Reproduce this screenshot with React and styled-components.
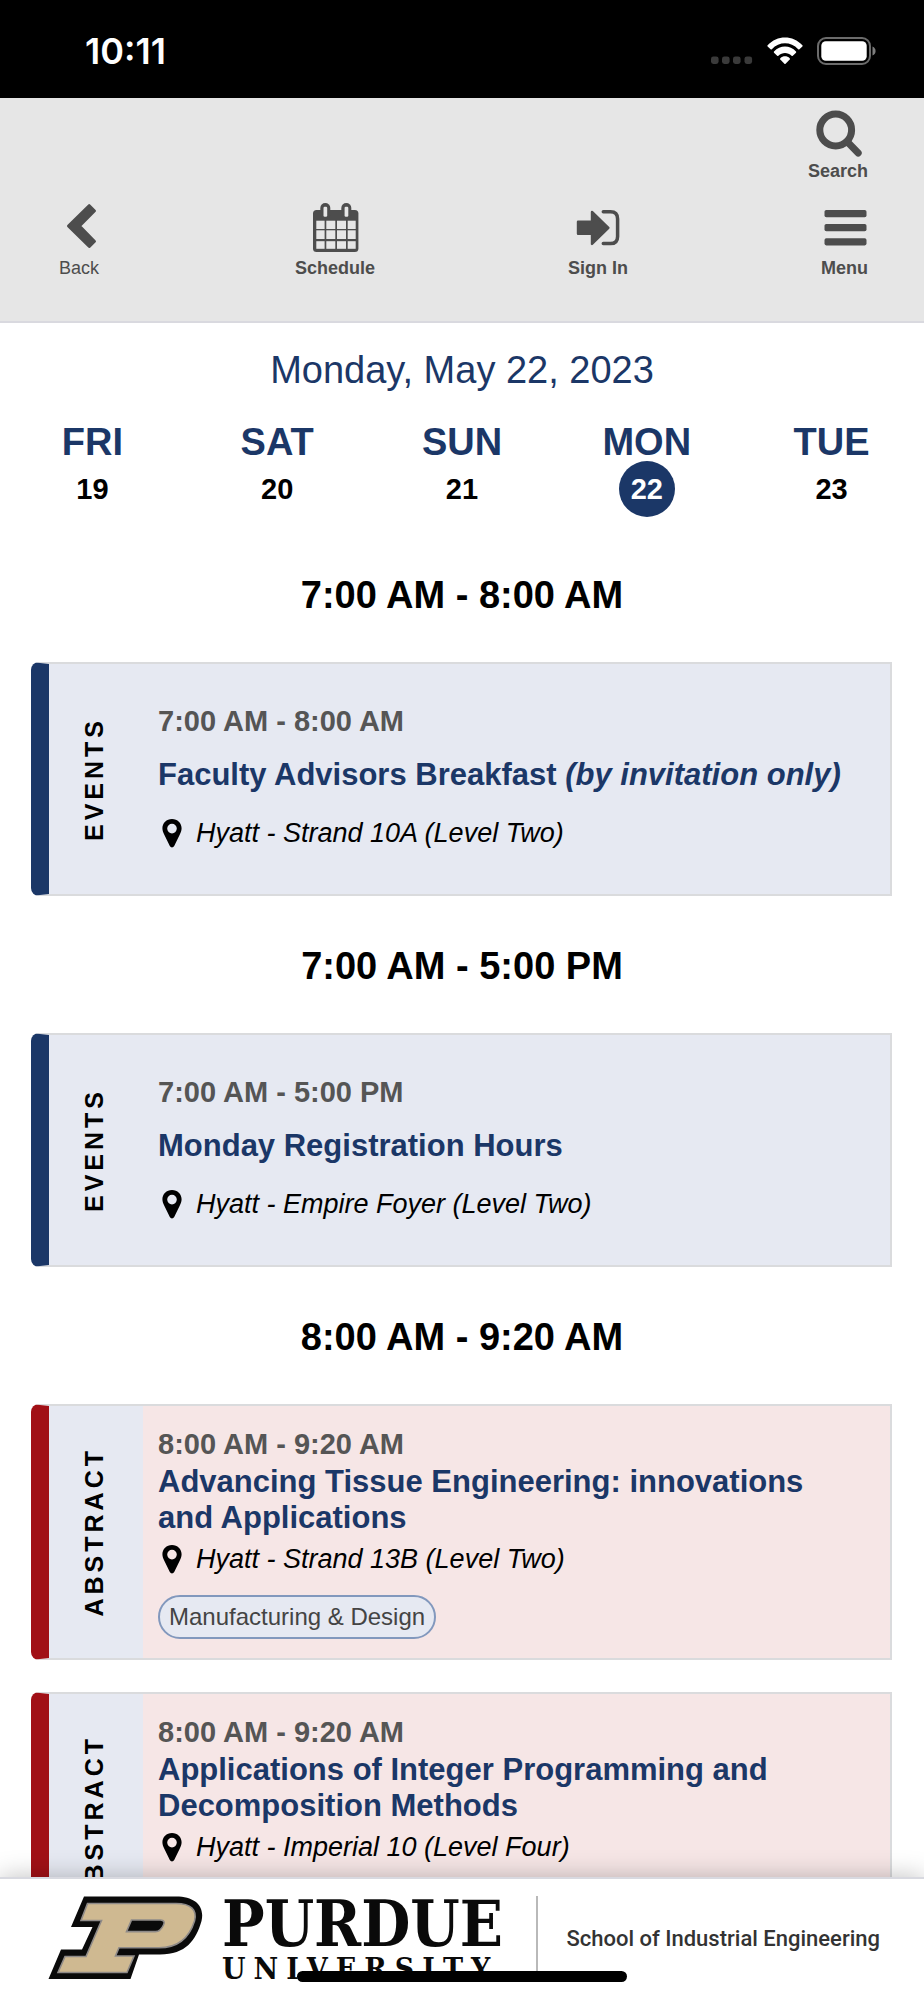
import React, { useState } from 'react';
import styled, { createGlobalStyle } from 'styled-components';

const GlobalStyle = createGlobalStyle`
    * {
        box-sizing: border-box;
    }
    body {
        margin: 0;
        background: white;
        color: black;
        font-family: 'Liberation Sans', Arial, Helvetica, sans-serif;
    }
    h1, h2, h3, p, ul {
        margin: 0;
        padding: 0;
    }
`

const Screen = styled.div`
    height: 100vh;
    display: flex;
    flex-direction: column;
`

/* status bar */

const StatusBar = styled.div`
    flex: none;
    height: 98px;
    padding: 4px 48px 0 85px;
    display: flex;
    align-items: center;
    justify-content: space-between;
    background: black;
`
const Clock = styled.span`
    color: white;
    font-family: Inter, sans-serif;
    font-size: 36px;
    font-weight: 600;
`
const StatusIcons = styled.div`
    display: flex;
    align-items: center;
    gap: 14px;
`

/* top navigation */

const Header = styled.header`
    flex: none;
    display: flex;
    flex-direction: column;
    gap: 20px;
    padding: 6px 56px 43px;
    background: #e6e6e6;
    border-bottom: 2px solid #d9d9df;
`
const NavRow = styled.nav`
    display: flex;
    justify-content: ${props => props.$end ? 'flex-end' : 'space-between'};
`
const NavLink = styled.a`
    display: flex;
    flex-direction: column;
    align-items: center;
    gap: 3px;
    color: #4d4d4d;
    font-size: 18px;
    font-weight: ${props => props.$light ? 400 : 700};
    line-height: 20px;
    text-decoration: none;
`
const NavIcon = styled.svg`
    display: block;
    width: 46px;
    height: 54px;
    overflow: visible;
    fill: currentColor;
`

/* day picker */

const Main = styled.main`
    flex: 1;
    min-height: 0;
    overflow-y: auto;
    scrollbar-width: none;
    padding: 25px 0 32px;
`
const DateTitle = styled.h1`
    color: #1b3767;
    font-size: 38px;
    font-weight: 400;
    line-height: 44px;
    text-align: center;
`
const Days = styled.div`
    display: grid;
    grid-template-columns: repeat(5, 1fr);
    padding: 31px 0 8px;
`
const Day = styled.button`
    display: flex;
    flex-direction: column;
    align-items: center;
    padding: 0;
    border: none;
    background: none;
    font-family: inherit;
    font-weight: 700;
    cursor: pointer;
`
const DayName = styled.span`
    color: #1b3767;
    font-size: 38px;
    line-height: 38px;
`
const DayNumber = styled.span`
    width: 56px;
    border-radius: 50%;
    background: ${props => props.$active ? '#1b3767' : 'transparent'};
    color: ${props => props.$active ? 'white' : 'black'};
    font-size: 29px;
    line-height: 56px;
`

/* sessions */

const SlotTitle = styled.h2`
    margin: 48px 0 45px;
    font-size: 38px;
    font-weight: 700;
    line-height: 44px;
    text-align: center;
`
const Cards = styled.div`
    display: flex;
    flex-direction: column;
    gap: 32px;
    margin: 0 32px 0 31px;
`
const Card = styled.article`
    display: flex;
    border: 2px solid #dadbdd;
    border-left: 18px solid ${props => props.$abstract ? '#a11016' : '#1b3767'};
    border-radius: 8px 0 0 8px;
    background: ${props => props.$abstract ? '#f6e6e6' : '#e6e9f2'};
`
const Kind = styled.div`
    flex: none;
    width: 94px;
    display: flex;
    align-items: center;
    justify-content: center;
    padding-right: 4px;
    background: #e6e9f2;

    span {
        writing-mode: vertical-rl;
        transform: rotate(180deg);
        font-size: 25px;
        font-weight: 700;
        letter-spacing: 4px;
        line-height: 30px;
        text-transform: uppercase;
    }
`
const Body = styled.div`
    flex: 1;
    padding: ${props => props.$abstract ? '20px 28px 19px 15px' : '39px 28px 43px 15px'};
`
const Time = styled.p`
    color: #555;
    font-size: 29px;
    font-weight: 700;
    line-height: 36px;
`
const Title = styled.h3`
    margin-top: ${props => props.$abstract ? '2px' : '18px'};
    font-size: 31px;
    font-weight: 700;
    line-height: 36px;

    a {
        color: #1b3767;
        text-decoration: none;
    }
`
const Place = styled.p`
    display: flex;
    align-items: center;
    gap: 14px;
    margin-top: ${props => props.$abstract ? '5px' : '22px'};
    padding-left: 4px;
    font-size: 27px;
    font-style: italic;
    line-height: 36px;
`
const Tags = styled.div`
    display: flex;
    min-height: 44px;
    margin-top: 18px;
`
const Tag = styled.span`
    padding: 0 9px;
    border: 2px solid #8298bd;
    border-radius: 22px;
    background: #e6e9f2;
    color: #444;
    font-size: 24px;
    line-height: 40px;
`

/* sponsor footer */

const Footer = styled.footer`
    flex: none;
    position: relative;
    display: flex;
    align-items: flex-start;
    height: 123px;
    padding: 17px 44px 0 48px;
    border-top: 2px solid #d8d9e0;
    background: white;
    box-shadow: 0 0 24px rgba(0, 0, 0, 0.25);
`
const Wordmark = styled.div`
    margin: 0 auto 0 18px;
    color: #0a0a0a;
    font-family: 'DejaVu Serif Condensed', 'DejaVu Serif', serif;
    font-weight: 700;
    white-space: nowrap;
`
const WordmarkName = styled.div`
    font-size: 63px;
    line-height: 56px;
`
const WordmarkSub = styled.div`
    font-size: 30px;
    letter-spacing: 8px;
    line-height: 34px;
`
const School = styled.div`
    display: flex;
    align-items: center;
    height: 84px;
    padding-left: 28px;
    border-left: 2px solid #b9b9b9;
    color: #333;
    font-family: Roboto, sans-serif;
    font-size: 22px;
    font-weight: 500;
    white-space: nowrap;
`
const HomeIndicator = styled.div`
    position: absolute;
    left: 50%;
    bottom: 18px;
    width: 330px;
    height: 11px;
    border-radius: 6px;
    background: black;
    transform: translateX(-50%);
`

const days = [
    { name: 'FRI', number: 19 },
    { name: 'SAT', number: 20 },
    { name: 'SUN', number: 21 },
    { name: 'MON', number: 22 },
    { name: 'TUE', number: 23 },
]

const slots = [
    {
        time: '7:00 AM - 8:00 AM',
        sessions: [
            { kind: 'Events', title: 'Faculty Advisors Breakfast', note: '(by invitation only)', place: 'Hyatt - Strand 10A (Level Two)' },
        ],
    },
    {
        time: '7:00 AM - 5:00 PM',
        sessions: [
            { kind: 'Events', title: 'Monday Registration Hours', place: 'Hyatt - Empire Foyer (Level Two)' },
        ],
    },
    {
        time: '8:00 AM - 9:20 AM',
        sessions: [
            { kind: 'Abstract', title: 'Advancing Tissue Engineering: innovations and Applications', place: 'Hyatt - Strand 13B (Level Two)', tags: ['Manufacturing & Design'] },
            { kind: 'Abstract', title: 'Applications of Integer Programming and Decomposition Methods', place: 'Hyatt - Imperial 10 (Level Four)', tags: [] },
        ],
    },
]

const SignalDots = () => (
    <svg width="42" height="28" viewBox="0 0 42 28" fill="#3a3a3a" aria-hidden="true">
        {[0, 11, 22, 33.5].map(x => <rect key={x} x={x} y="19.4" width="7.6" height="7.6" rx="2.4" />)}
    </svg>
)

const Wifi = () => (
    <svg width="36" height="28" viewBox="0 0 36 28" fill="white" aria-hidden="true">
        <path d="M0.6 8.2C10-2.2 26-2.2 35.4 8.2Q35.9 8.8 35.4 9.4L32.4 12.2Q31.8 12.7 31.2 12.2C23.8 4.4 12.2 4.4 4.8 12.2Q4.2 12.7 3.6 12.2L0.6 9.4Q0.1 8.8 0.6 8.2Z" />
        <path d="M7 14.6C13 7.8 23 7.8 29 14.6Q29.5 15.2 29 15.8L25.8 18.8Q25.2 19.3 24.6 18.8C20.8 15 15.2 15 11.4 18.8Q10.8 19.3 10.2 18.8L7 15.8Q6.5 15.2 7 14.6Z" />
        <path d="M13.3 21.2C16 18.6 20 18.6 22.7 21.2Q23.2 21.8 22.7 22.4L18.6 26.7Q18 27.2 17.4 26.7L13.3 22.4Q12.8 21.8 13.3 21.2Z" />
    </svg>
)

const Battery = () => (
    <svg width="59" height="28" viewBox="0 0 59 28" aria-hidden="true">
        <rect x="1" y="1" width="52" height="26" rx="8" fill="none" stroke="#6b6b6b" strokeWidth="2" />
        <rect x="4.3" y="4.3" width="45.4" height="19.4" rx="4.5" fill="white" />
        <path d="M55.5 9.5Q58.6 11 58.6 14T55.5 18.5Z" fill="#7d7d7d" />
    </svg>
)

const SearchIcon = () => (
    <NavIcon viewBox="0 0 46 54" aria-hidden="true">
        <g fill="none" stroke="currentColor" strokeWidth="7">
            <circle cx="20.7" cy="26" r="15.9" />
            <path d="M32 37.5L43.2 49" strokeLinecap="round" />
        </g>
    </NavIcon>
)

const BackIcon = () => (
    <NavIcon viewBox="0 0 46 54" aria-hidden="true">
        <path d="M12.3 25L33.2 4.3L38.7 9.8L23.6 25L38.7 40.4L33.2 45.7Z" stroke="currentColor" strokeWidth="2.6" strokeLinejoin="round" />
    </NavIcon>
)

const ScheduleIcon = () => (
    <NavIcon viewBox="0 0 46 54" aria-hidden="true">
        <rect x="1" y="9" width="45.4" height="42" rx="3.5" />
        <rect x="8.3" y="2" width="10" height="16" rx="5" />
        <rect x="29.3" y="2" width="10" height="16" rx="5" />
        <g fill="#e6e6e6">
            <rect x="11.5" y="5.7" width="3.7" height="10" rx="1.2" />
            <rect x="32.6" y="5.7" width="3.7" height="10" rx="1.2" />
            {[[19.7, 8.3], [29.3, 8.7], [40.2, 7.6]].map(([y, h]) => (
                [[4.3, 8.3], [14.3, 9], [25, 9], [35.7, 8]].map(([x, w]) => (
                    <rect key={`${x}-${y}`} x={x} y={y} width={w} height={h} />
                ))
            ))}
        </g>
    </NavIcon>
)

const SignInIcon = () => (
    <NavIcon viewBox="0 0 46 54" aria-hidden="true">
        <path d="M3 20.7H17V10.9L33.4 26.8L17 42.9V32.8H3Z" stroke="currentColor" strokeWidth="2.4" strokeLinejoin="round" />
        <path d="M28.3 10.8H35.5Q42.6 10.8 42.6 18V35.4Q42.6 42.6 35.5 42.6H28.3" fill="none" stroke="currentColor" strokeWidth="3.5" strokeLinecap="round" />
    </NavIcon>
)

const MenuIcon = () => (
    <NavIcon viewBox="0 0 46 54" aria-hidden="true">
        <rect x="3.5" y="9" width="42" height="7.2" rx="1.8" />
        <rect x="3.5" y="23" width="42" height="7.2" rx="1.8" />
        <rect x="3.5" y="37.2" width="42" height="7.2" rx="1.8" />
    </NavIcon>
)

const Pin = () => (
    <svg width="20" height="30" viewBox="0 0 20 30" aria-hidden="true">
        <path fillRule="evenodd" d="M10 1C4.5 1 0.4 5.2 0.4 10.3C0.4 13 1.4 14.8 2.3 16.8L7.8 28Q8.6 29.4 10 29.4T12.2 28L17.7 16.8C18.6 14.8 19.6 13 19.6 10.3C19.6 5.2 15.5 1 10 1ZM10 5.8A4.8 4.8 0 1 1 10 15.4A4.8 4.8 0 1 1 10 5.8Z" />
    </svg>
)

const PurdueLogo = () => (
    <svg width="156" height="84" viewBox="0 0 156 84" role="img" aria-label="Purdue">
        <path fill="#0a0a0a" d="M36 0.5H128C147 0.5 157 10 153.5 25C148 44 138 58.5 112 58.5H91L82.5 83H0.5L13 53.5H34L44.5 31H23Z" />
        <path fill="#cfb991" stroke="#8e8a88" strokeWidth="1.6" d="M39.5 7.5H128C143 7.5 149.5 14 146.5 25C141.5 41 131.5 51.8 111 51.8H71L67.5 60H86L79 76.5H10L17 60.5H38L53.5 24.5H33Z" />
        <path fill="#0a0a0a" stroke="#8e8a88" strokeWidth="1.6" d="M83.5 24H112.5Q117.8 24.5 115.5 29Q112.5 35.6 107.5 35.6H78.5Z" />
    </svg>
)

const Session = ({ session, time }) => {
    const abstract = session.kind === 'Abstract'

    return (
        <Card $abstract={abstract}>
            <Kind><span>{session.kind}</span></Kind>
            <Body $abstract={abstract}>
                <Time>{time}</Time>
                <Title $abstract={abstract}>
                    <a href='#session'>{session.title}{session.note && <em> {session.note}</em>}</a>
                </Title>
                <Place $abstract={abstract}><Pin />{session.place}</Place>
                {session.tags && (
                    <Tags>
                        {session.tags.map(tag => <Tag key={tag}>{tag}</Tag>)}
                    </Tags>
                )}
            </Body>
        </Card>
    )
}

const App = () => {
    const [selected, setSelected] = useState(22)

    return (
        <Screen>
            <GlobalStyle />
            <StatusBar>
                <Clock>10:11</Clock>
                <StatusIcons>
                    <SignalDots />
                    <Wifi />
                    <Battery />
                </StatusIcons>
            </StatusBar>

            <Header>
                <NavRow $end>
                    <NavLink href='#search'><SearchIcon />Search</NavLink>
                </NavRow>
                <NavRow>
                    <NavLink href='#back' $light><BackIcon />Back</NavLink>
                    <NavLink href='#schedule'><ScheduleIcon />Schedule</NavLink>
                    <NavLink href='#signin'><SignInIcon />Sign In</NavLink>
                    <NavLink href='#menu'><MenuIcon />Menu</NavLink>
                </NavRow>
            </Header>

            <Main>
                <DateTitle>Monday, May 22, 2023</DateTitle>
                <Days>
                    {days.map(day => (
                        <Day key={day.number} type='button' onClick={() => setSelected(day.number)}>
                            <DayName>{day.name}</DayName>
                            <DayNumber $active={day.number === selected}>{day.number}</DayNumber>
                        </Day>
                    ))}
                </Days>

                {slots.map(slot => (
                    <section key={slot.time}>
                        <SlotTitle>{slot.time}</SlotTitle>
                        <Cards>
                            {slot.sessions.map(session => (
                                <Session key={session.title} session={session} time={slot.time} />
                            ))}
                        </Cards>
                    </section>
                ))}
            </Main>

            <Footer>
                <PurdueLogo />
                <Wordmark>
                    <WordmarkName>PURDUE</WordmarkName>
                    <WordmarkSub>UNIVERSITY</WordmarkSub>
                </Wordmark>
                <School>School of Industrial Engineering</School>
                <HomeIndicator />
            </Footer>
        </Screen>
    )
}

export default App;
